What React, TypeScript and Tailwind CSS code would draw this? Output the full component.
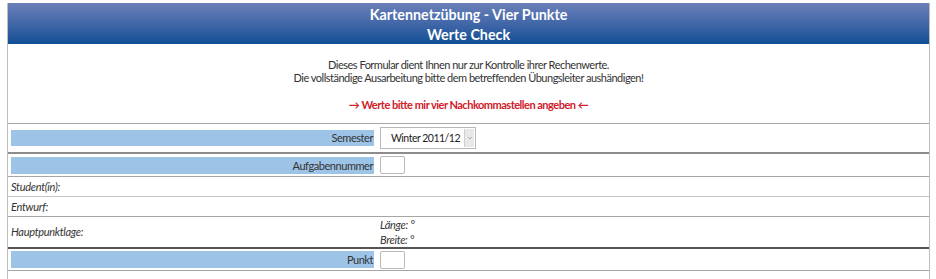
// @ts-nocheck
import React from 'react';

const font = { fontFamily: 'Lato, "Open Sans", sans-serif' };

const LabelRow = ({ label, children, h }) => (
  <div className={`flex items-center border-b border-[#a6a6a6] px-[3px] ${h}`}>
    <div className="w-[363px] h-[17px] bg-[#9dc3e6] text-right pr-[1px] text-[11px] tracking-[-0.45px] leading-[17px] text-[#333]">
      {label}
    </div>
    <div className="pl-[6px]">{children}</div>
  </div>
);

const SmallInput = () => (
  <div className="w-[25px] h-[18px] bg-white border border-[#b8b8b8] rounded-[2px]" />
);

export default function App() {
  return (
    <div className="w-[936px] h-[279px] bg-white overflow-hidden pt-[3px] pl-[7px]" style={font}>
      <div className="w-[923px] border-l border-r border-[#bdbdbd] h-[300px]">
        {/* header */}
        <div className="h-[41px] bg-gradient-to-b from-[#6b80b9] to-[#0c4e96] text-white font-bold text-[14.3px] leading-[19.5px] text-center pt-[2px]">
          <div>Kartennetzübung - Vier Punkte</div>
          <div>Werte Check</div>
        </div>

        {/* intro */}
        <div className="h-[80px] border-b border-[#a6a6a6] text-center text-[11px] tracking-[-0.5px] text-[#333] pt-[14px]">
          <div className="leading-[13px]">Dieses Formular dient Ihnen nur zur Kontrolle ihrer Rechenwerte.</div>
          <div className="leading-[13px]">Die vollständige Ausarbeitung bitte dem betreffenden Übungsleiter aushändigen!</div>
          <div className="leading-[13px] mt-[14px] text-[#d0202a] font-bold">
            → Werte bitte mir vier Nachkommastellen angeben ←
          </div>
        </div>

        {/* semester */}
        <div className="flex items-center border-b-2 border-[#8c8c8c] px-[3px] h-[30px]">
          <div className="w-[363px] h-[16px] bg-[#9dc3e6] text-right pr-[1px] text-[11px] tracking-[-0.45px] leading-[16px] text-[#333]">
            Semester
          </div>
          <div className="pl-[6px]">
            <div className="flex w-[96px] h-[22px] border border-[#b8b8b8] bg-white">
              <div className="flex-1 whitespace-nowrap text-[10.5px] tracking-[-0.5px] leading-[20px] pl-[10px] text-[#222]">Winter 2011/12</div>
              <div className="w-[10px] m-[1px] bg-[#e8e8e8] border-l border-[#d0d0d0] flex items-center justify-center">
                <svg width="6" height="4" viewBox="0 0 6 4">
                  <path d="M1 1 L3 3 L5 1" stroke="#999" strokeWidth="0.8" fill="none" />
                </svg>
              </div>
            </div>
          </div>
        </div>

        <LabelRow label="Aufgabennummer" h="h-[23px]">
          <SmallInput />
        </LabelRow>

        <div className="h-[20px] border-b border-[#c4c4c4] px-[3px] italic text-[11px] tracking-[-0.3px] leading-[19px] text-[#333]">
          Student(in):
        </div>
        <div className="h-[20px] border-b border-[#a6a6a6] px-[3px] italic text-[11px] tracking-[-0.3px] leading-[19px] text-[#333]">
          Entwurf:
        </div>

        <div className="h-[32px] border-b-2 border-[#555] px-[3px] flex items-center italic text-[11px] tracking-[-0.3px] text-[#333]">
          <div className="w-[369px]">Hauptpunktlage:</div>
          <div className="leading-[15px]">
            <div>Länge: °</div>
            <div>Breite: °</div>
          </div>
        </div>

        <LabelRow label="Punkt" h="h-[22px]">
          <SmallInput />
        </LabelRow>
      </div>
    </div>
  );
}
